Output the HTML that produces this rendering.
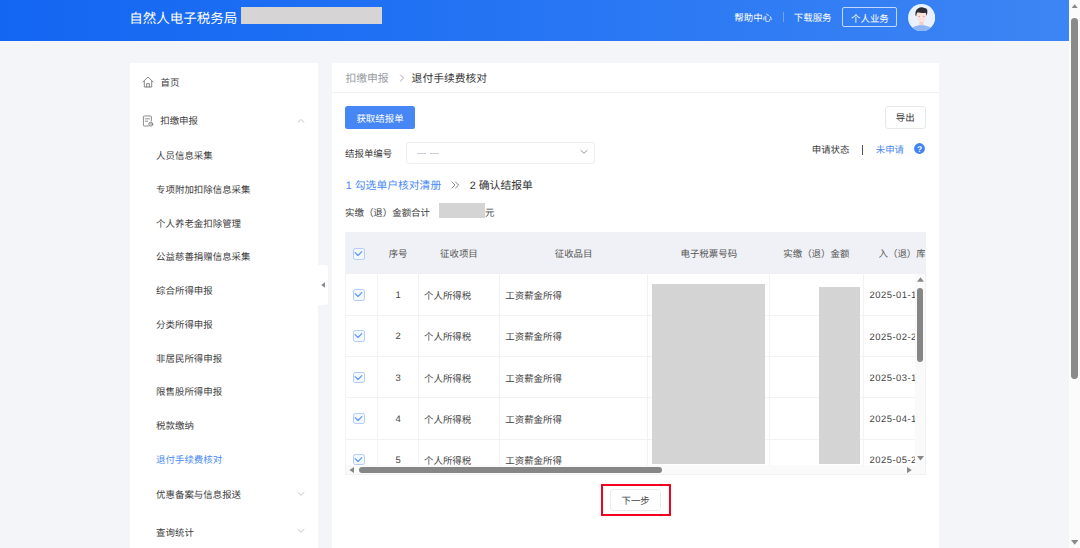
<!DOCTYPE html>
<html lang="zh-CN">
<head>
<meta charset="utf-8">
<title>自然人电子税务局</title>
<style>
*{box-sizing:border-box;margin:0;padding:0}
html,body{width:1080px;height:548px;overflow:hidden;background:#f4f5f9;font-family:"Liberation Sans",sans-serif;color:#333}
body{position:relative;font-size:9.45px;text-rendering:geometricPrecision}
.a{position:absolute}
.t{position:absolute;white-space:nowrap}
</style>
</head>
<body>
<div class="a" style="left:0.00px;top:0.00px;width:1069.00px;height:41.00px;background:linear-gradient(90deg,#1366f2 0%,#1f70f3 35%,#3d85f4 100%)"></div>
<div class="t" style="left:129.20px;top:8.80px;font-size:13.5px;line-height:20px;height:20px;color:#fff;">自然人电子税务局</div>
<div class="a" style="left:240.70px;top:7.20px;width:141.30px;height:16.90px;background:#d6d4d4"></div>
<div class="t" style="left:734.30px;top:11.50px;font-size:9.45px;line-height:14px;height:14px;color:#fff;">帮助中心</div>
<div class="a" style="left:783.00px;top:12.30px;width:1.00px;height:10.00px;background:rgba(255,255,255,.3)"></div>
<div class="t" style="left:793.80px;top:11.50px;font-size:9.45px;line-height:14px;height:14px;color:#fff;">下载服务</div>
<div class="a" style="left:842.30px;top:7.10px;width:55.20px;height:19.80px;border:1px solid rgba(255,255,255,.7);border-radius:2px"></div>
<div class="t" style="left:842.30px;top:12.50px;font-size:9.45px;line-height:14px;height:14px;color:#fff;width:55.2px;text-align:center;">个人业务</div>
<svg class="a" style="left:908.10px;top:3.90px" width="27.3" height="27.3" viewBox="0 0 27.3 27.3" ><defs><clipPath id="avc"><circle cx="13.65" cy="13.65" r="13.6"/></clipPath></defs><circle cx="13.65" cy="13.65" r="13.6" fill="#e8f1fd"/><g clip-path="url(#avc)"><path d="M1.5 27.3 Q3 22.8 9.2 21.7 L13.5 20.4 L17.9 21.7 Q24 22.8 25.8 27.3 Z" fill="#8fb5f7"/><path d="M11.4 15.5 H15.5 V20.6 Q13.5 22.6 11.4 20.6 Z" fill="#f8cdc5"/><path d="M8.3 8.6 Q7.9 13 9.6 15.5 Q11.5 18.1 13.5 18.1 Q15.5 18.1 17.2 15.5 Q18.8 13 18.4 8.6 Z" fill="#fbdfd9"/><path d="M7.7 12 Q6.5 6.6 10 4.5 Q13 2.6 16.4 3.9 Q18.7 4.1 19.3 6 Q19.6 8.6 18.7 12 Q18.4 9.6 17.5 8.7 Q13.5 9.6 9.6 8.3 Q8.4 9.5 8.2 12 Z" fill="#2b2d33"/><circle cx="11.3" cy="12.5" r="0.55" fill="#8b8f99"/><circle cx="15.8" cy="12.5" r="0.55" fill="#8b8f99"/><path d="M12.2 16.2 Q13.5 17.4 14.9 16.2 Z" fill="#fff"/></g></svg>
<div class="a" style="left:1069.00px;top:0.00px;width:11.00px;height:548.00px;background:#fbfbfb"></div>
<div class="a" style="left:1071.00px;top:18.00px;width:6.80px;height:361.00px;border-radius:3.4px;background:#8a8a8a"></div>
<svg class="a" style="left:1070.70px;top:3.60px" width="7.4" height="4.8" viewBox="0 0 7.4 4.8" ><path d="M0 4.8 L3.7 0.2 L7.4 4.8 Z" fill="#888"/></svg>
<svg class="a" style="left:1070.70px;top:539.60px" width="7.4" height="5" viewBox="0 0 7.4 5" ><path d="M0 0 L3.7 4.8 L7.4 0 Z" fill="#888"/></svg>
<div class="a" style="left:130.00px;top:63.00px;width:188.00px;height:485.00px;background:#fff"></div>
<div class="a" style="left:318.00px;top:265.00px;width:9.80px;height:40.30px;background:#fff;border-radius:0 3px 3px 0"></div>
<svg class="a" style="left:321.00px;top:282.30px" width="4.2" height="6" viewBox="0 0 4.2 6" ><path d="M4.2 0 L0.2 3 L4.2 6 Z" fill="#8a8a8a"/></svg>
<div class="t" style="left:160.60px;top:77.40px;font-size:9.45px;line-height:14px;height:14px;color:#3c3c3c;">首页</div>
<div class="t" style="left:160.20px;top:115.40px;font-size:9.45px;line-height:14px;height:14px;color:#3c3c3c;">扣缴申报</div>
<div class="t" style="left:156.10px;top:150.10px;font-size:9.45px;line-height:14px;height:14px;color:#3c3c3c;">人员信息采集</div>
<div class="t" style="left:156.10px;top:183.85px;font-size:9.45px;line-height:14px;height:14px;color:#3c3c3c;">专项附加扣除信息采集</div>
<div class="t" style="left:156.10px;top:217.60px;font-size:9.45px;line-height:14px;height:14px;color:#3c3c3c;">个人养老金扣除管理</div>
<div class="t" style="left:156.10px;top:251.35px;font-size:9.45px;line-height:14px;height:14px;color:#3c3c3c;">公益慈善捐赠信息采集</div>
<div class="t" style="left:156.10px;top:285.10px;font-size:9.45px;line-height:14px;height:14px;color:#3c3c3c;">综合所得申报</div>
<div class="t" style="left:156.10px;top:318.85px;font-size:9.45px;line-height:14px;height:14px;color:#3c3c3c;">分类所得申报</div>
<div class="t" style="left:156.10px;top:352.60px;font-size:9.45px;line-height:14px;height:14px;color:#3c3c3c;">非居民所得申报</div>
<div class="t" style="left:156.10px;top:386.35px;font-size:9.45px;line-height:14px;height:14px;color:#3c3c3c;">限售股所得申报</div>
<div class="t" style="left:156.10px;top:420.10px;font-size:9.45px;line-height:14px;height:14px;color:#3c3c3c;">税款缴纳</div>
<div class="t" style="left:156.10px;top:453.85px;font-size:9.45px;line-height:14px;height:14px;color:#4a8af4;">退付手续费核对</div>
<div class="t" style="left:156.10px;top:489.40px;font-size:9.45px;line-height:14px;height:14px;color:#3c3c3c;">优惠备案与信息报送</div>
<div class="t" style="left:156.10px;top:527.40px;font-size:9.45px;line-height:14px;height:14px;color:#3c3c3c;">查询统计</div>
<svg class="a" style="left:142.40px;top:76.40px" width="12" height="12" viewBox="0 0 12 12" fill="none" stroke="#707070" stroke-width="0.85" stroke-linejoin="round" stroke-linecap="round"><path d="M0.9 5.9 L6 1 L11.1 5.9"/><path d="M2.3 5 V11 H9.7 V5"/><path d="M4.7 11 V7.6 H7.3 V11"/></svg>
<svg class="a" style="left:142.40px;top:114.60px" width="12" height="12" viewBox="0 0 12 12" fill="none" stroke="#777" stroke-width="0.85" stroke-linejoin="round" stroke-linecap="round"><path d="M6.4 11 H2.2 Q1.4 11 1.4 10.2 V1.8 Q1.4 1 2.2 1 H8.6 Q9.4 1 9.4 1.8 V6"/><path d="M3.3 3.8 H7.5 M3.3 6.2 H5.6"/><circle cx="8.8" cy="9.2" r="2"/><path d="M8.1 8.7 H9.5 M8.1 9.7 H9.5" stroke-width="0.55"/></svg>
<svg class="a" style="left:297.00px;top:117.60px" width="8" height="6" viewBox="0 0 8 6" fill="none" stroke="#b9bcc4" stroke-width="0.9" stroke-linecap="round" stroke-linejoin="round"><path d="M1 4.3 L4 1.5 L7 4.3"/></svg>
<svg class="a" style="left:297.10px;top:490.60px" width="8" height="6" viewBox="0 0 8 6" fill="none" stroke="#b9bcc4" stroke-width="0.9" stroke-linecap="round" stroke-linejoin="round"><path d="M1 1.5 L4 4.3 L7 1.5"/></svg>
<svg class="a" style="left:297.10px;top:528.20px" width="8" height="6" viewBox="0 0 8 6" fill="none" stroke="#b9bcc4" stroke-width="0.9" stroke-linecap="round" stroke-linejoin="round"><path d="M1 1.5 L4 4.3 L7 1.5"/></svg>
<div class="a" style="left:332.00px;top:63.00px;width:607.00px;height:485.00px;background:#fff"></div>
<div class="a" style="left:332.00px;top:91.70px;width:607.00px;height:1.40px;background:#eff1f6"></div>
<div class="t" style="left:345.40px;top:71.65px;font-size:10.8px;line-height:14px;height:14px;color:#9a9da3;">扣缴申报</div>
<svg class="a" style="left:399.30px;top:74.30px" width="6" height="8" viewBox="0 0 6 8" fill="none" stroke="#9a9da3" stroke-width="0.9" stroke-linecap="round" stroke-linejoin="round"><path d="M1.5 1 L4.5 4 L1.5 7"/></svg>
<div class="t" style="left:411.60px;top:71.65px;font-size:10.8px;line-height:14px;height:14px;color:#333;">退付手续费核对</div>
<div class="a" style="left:345.00px;top:106.00px;width:70.00px;height:22.50px;background:#4687f5;border-radius:2.5px"></div>
<div class="t" style="left:345.00px;top:112.70px;font-size:9.45px;line-height:14px;height:14px;color:#fff;width:70px;text-align:center;">获取结报单</div>
<div class="a" style="left:884.90px;top:106.00px;width:40.80px;height:22.70px;background:#fff;border:1px solid #e6e8ec;border-radius:3px"></div>
<div class="t" style="left:884.90px;top:112.30px;font-size:9.45px;line-height:14px;height:14px;color:#333;width:40.8px;text-align:center;">导出</div>
<div class="t" style="left:345.00px;top:148.20px;font-size:9.45px;line-height:14px;height:14px;color:#3c3c3c;">结报单编号</div>
<div class="a" style="left:406.00px;top:141.60px;width:189.20px;height:22.00px;border:1px solid #eceef2;border-radius:3px;background:#fff"></div>
<div class="a" style="left:416.60px;top:153.40px;width:9.60px;height:1.00px;background:#c9ccd3"></div>
<div class="a" style="left:429.80px;top:153.40px;width:9.60px;height:1.00px;background:#c9ccd3"></div>
<svg class="a" style="left:579.70px;top:149.20px" width="8" height="6" viewBox="0 0 8 6" fill="none" stroke="#8a8d94" stroke-width="0.9" stroke-linecap="round" stroke-linejoin="round"><path d="M1 1.5 L4 4.3 L7 1.5"/></svg>
<div class="t" style="left:811.70px;top:144.00px;font-size:9.45px;line-height:14px;height:14px;color:#3c3c3c;">申请状态</div>
<div class="a" style="left:862.00px;top:144.80px;width:1.20px;height:9.80px;background:#555"></div>
<div class="t" style="left:875.70px;top:144.00px;font-size:9.45px;line-height:14px;height:14px;color:#4a8af4;">未申请</div>
<svg class="a" style="left:914.30px;top:142.60px" width="11" height="11" viewBox="0 0 11 11" ><circle cx="5.5" cy="5.5" r="5.4" fill="#3f83f6"/><text x="5.5" y="8.5" font-size="8.4" font-weight="bold" fill="#fff" text-anchor="middle" font-family="Liberation Sans, sans-serif">?</text></svg>
<div class="t" style="left:345.80px;top:178.65px;font-size:10.8px;line-height:14px;height:14px;color:#4a8af4;">1 勾选单户核对清册</div>
<svg class="a" style="left:451.00px;top:180.80px" width="9" height="8" viewBox="0 0 9 8" fill="none" stroke="#666" stroke-width="0.8" stroke-linecap="round" stroke-linejoin="round"><path d="M1 1 L4 4 L1 7 M4.6 1 L7.6 4 L4.6 7"/></svg>
<div class="t" style="left:469.80px;top:178.65px;font-size:10.8px;line-height:14px;height:14px;color:#333;">2 确认结报单</div>
<div class="t" style="left:345.00px;top:207.40px;font-size:9.45px;line-height:14px;height:14px;color:#3c3c3c;">实缴（退）金额合计</div>
<div class="a" style="left:439.00px;top:203.00px;width:46.00px;height:14.60px;background:#d4d4d4"></div>
<div class="t" style="left:485.00px;top:207.40px;font-size:9.45px;line-height:14px;height:14px;color:#3c3c3c;">元</div>
<div class="a" style="left:345.20px;top:232.10px;width:580.60px;height:242.50px;background:#fff"></div>
<div class="a" style="left:345.20px;top:232.10px;width:580.60px;height:41.90px;background:#f0f1f6"></div>
<div class="t" style="left:338.10px;top:248.00px;font-size:9.45px;line-height:14px;height:14px;color:#555;width:120px;text-align:center;">序号</div>
<div class="t" style="left:398.90px;top:248.00px;font-size:9.45px;line-height:14px;height:14px;color:#555;width:120px;text-align:center;">征收项目</div>
<div class="t" style="left:513.60px;top:248.00px;font-size:9.45px;line-height:14px;height:14px;color:#555;width:120px;text-align:center;">征收品目</div>
<div class="t" style="left:648.80px;top:248.00px;font-size:9.45px;line-height:14px;height:14px;color:#555;width:120px;text-align:center;">电子税票号码</div>
<div class="t" style="left:756.30px;top:248.00px;font-size:9.45px;line-height:14px;height:14px;color:#555;width:120px;text-align:center;">实缴（退）金额</div>
<div class="t" style="left:378.10px;top:289.20px;font-size:9.45px;line-height:14px;height:14px;color:#444;width:40px;text-align:center;">1</div>
<div class="t" style="left:424.00px;top:290.10px;font-size:9.45px;line-height:14px;height:14px;color:#444;">个人所得税</div>
<div class="t" style="left:505.30px;top:290.10px;font-size:9.45px;line-height:14px;height:14px;color:#444;">工资薪金所得</div>
<div class="t" style="left:869.60px;top:289.30px;font-size:9.45px;line-height:14px;height:14px;color:#444;letter-spacing:0.45px;">2025-01-19</div>
<div class="t" style="left:378.10px;top:330.40px;font-size:9.45px;line-height:14px;height:14px;color:#444;width:40px;text-align:center;">2</div>
<div class="t" style="left:424.00px;top:331.30px;font-size:9.45px;line-height:14px;height:14px;color:#444;">个人所得税</div>
<div class="t" style="left:505.30px;top:331.30px;font-size:9.45px;line-height:14px;height:14px;color:#444;">工资薪金所得</div>
<div class="t" style="left:869.60px;top:330.50px;font-size:9.45px;line-height:14px;height:14px;color:#444;letter-spacing:0.45px;">2025-02-29</div>
<div class="t" style="left:378.10px;top:371.60px;font-size:9.45px;line-height:14px;height:14px;color:#444;width:40px;text-align:center;">3</div>
<div class="t" style="left:424.00px;top:372.50px;font-size:9.45px;line-height:14px;height:14px;color:#444;">个人所得税</div>
<div class="t" style="left:505.30px;top:372.50px;font-size:9.45px;line-height:14px;height:14px;color:#444;">工资薪金所得</div>
<div class="t" style="left:869.60px;top:371.70px;font-size:9.45px;line-height:14px;height:14px;color:#444;letter-spacing:0.45px;">2025-03-19</div>
<div class="t" style="left:378.10px;top:412.80px;font-size:9.45px;line-height:14px;height:14px;color:#444;width:40px;text-align:center;">4</div>
<div class="t" style="left:424.00px;top:413.70px;font-size:9.45px;line-height:14px;height:14px;color:#444;">个人所得税</div>
<div class="t" style="left:505.30px;top:413.70px;font-size:9.45px;line-height:14px;height:14px;color:#444;">工资薪金所得</div>
<div class="t" style="left:869.60px;top:412.90px;font-size:9.45px;line-height:14px;height:14px;color:#444;letter-spacing:0.45px;">2025-04-19</div>
<div class="t" style="left:378.10px;top:454.00px;font-size:9.45px;line-height:14px;height:14px;color:#444;width:40px;text-align:center;">5</div>
<div class="t" style="left:424.00px;top:454.90px;font-size:9.45px;line-height:14px;height:14px;color:#444;">个人所得税</div>
<div class="t" style="left:505.30px;top:454.90px;font-size:9.45px;line-height:14px;height:14px;color:#444;">工资薪金所得</div>
<div class="t" style="left:869.60px;top:454.10px;font-size:9.45px;line-height:14px;height:14px;color:#444;letter-spacing:0.45px;">2025-05-29</div>
<div class="t" style="left:878.50px;top:248.00px;font-size:9.45px;line-height:14px;height:14px;color:#555;width:47.3px;overflow:hidden;">入（退）库日期</div>
<div class="a" style="left:376.90px;top:232.10px;width:1.00px;height:233.50px;background:#f1f2f6"></div>
<div class="a" style="left:418.20px;top:232.10px;width:1.00px;height:233.50px;background:#f1f2f6"></div>
<div class="a" style="left:499.00px;top:232.10px;width:1.00px;height:233.50px;background:#f1f2f6"></div>
<div class="a" style="left:647.30px;top:232.10px;width:1.00px;height:233.50px;background:#f1f2f6"></div>
<div class="a" style="left:769.00px;top:232.10px;width:1.00px;height:233.50px;background:#f1f2f6"></div>
<div class="a" style="left:862.90px;top:232.10px;width:1.00px;height:233.50px;background:#f1f2f6"></div>
<div class="a" style="left:345.20px;top:314.80px;width:570.60px;height:1.00px;background:#f1f2f6"></div>
<div class="a" style="left:345.20px;top:356.10px;width:570.60px;height:1.00px;background:#f1f2f6"></div>
<div class="a" style="left:345.20px;top:397.40px;width:570.60px;height:1.00px;background:#f1f2f6"></div>
<div class="a" style="left:345.20px;top:438.70px;width:570.60px;height:1.00px;background:#f1f2f6"></div>
<div class="a" style="left:353.20px;top:248.00px;width:11.60px;height:11.60px;border:1.2px solid #b3cefa;border-radius:2.2px;background:#f3f7ff"></div>
<svg class="a" style="left:353.20px;top:248.00px" width="11.6" height="11.6" viewBox="0 0 11.6 11.6" fill="none" stroke="#5b97f6" stroke-width="1.15" stroke-linecap="round" stroke-linejoin="round"><path d="M2.1 4.7 L5 7.5 L8.8 3.7"/></svg>
<div class="a" style="left:353.20px;top:289.10px;width:11.60px;height:11.60px;border:1.2px solid #b3cefa;border-radius:2.2px;background:#f3f7ff"></div>
<svg class="a" style="left:353.20px;top:289.10px" width="11.6" height="11.6" viewBox="0 0 11.6 11.6" fill="none" stroke="#5b97f6" stroke-width="1.15" stroke-linecap="round" stroke-linejoin="round"><path d="M2.1 4.7 L5 7.5 L8.8 3.7"/></svg>
<div class="a" style="left:353.20px;top:330.30px;width:11.60px;height:11.60px;border:1.2px solid #b3cefa;border-radius:2.2px;background:#f3f7ff"></div>
<svg class="a" style="left:353.20px;top:330.30px" width="11.6" height="11.6" viewBox="0 0 11.6 11.6" fill="none" stroke="#5b97f6" stroke-width="1.15" stroke-linecap="round" stroke-linejoin="round"><path d="M2.1 4.7 L5 7.5 L8.8 3.7"/></svg>
<div class="a" style="left:353.20px;top:371.50px;width:11.60px;height:11.60px;border:1.2px solid #b3cefa;border-radius:2.2px;background:#f3f7ff"></div>
<svg class="a" style="left:353.20px;top:371.50px" width="11.6" height="11.6" viewBox="0 0 11.6 11.6" fill="none" stroke="#5b97f6" stroke-width="1.15" stroke-linecap="round" stroke-linejoin="round"><path d="M2.1 4.7 L5 7.5 L8.8 3.7"/></svg>
<div class="a" style="left:353.20px;top:412.70px;width:11.60px;height:11.60px;border:1.2px solid #b3cefa;border-radius:2.2px;background:#f3f7ff"></div>
<svg class="a" style="left:353.20px;top:412.70px" width="11.6" height="11.6" viewBox="0 0 11.6 11.6" fill="none" stroke="#5b97f6" stroke-width="1.15" stroke-linecap="round" stroke-linejoin="round"><path d="M2.1 4.7 L5 7.5 L8.8 3.7"/></svg>
<div class="a" style="left:353.20px;top:453.90px;width:11.60px;height:11.60px;border:1.2px solid #b3cefa;border-radius:2.2px;background:#f3f7ff"></div>
<svg class="a" style="left:353.20px;top:453.90px" width="11.6" height="11.6" viewBox="0 0 11.6 11.6" fill="none" stroke="#5b97f6" stroke-width="1.15" stroke-linecap="round" stroke-linejoin="round"><path d="M2.1 4.7 L5 7.5 L8.8 3.7"/></svg>
<div class="a" style="left:651.80px;top:283.70px;width:112.80px;height:180.70px;background:#d4d4d4"></div>
<div class="a" style="left:818.70px;top:286.70px;width:41.20px;height:177.60px;background:#d4d4d4"></div>
<div class="a" style="left:915.40px;top:274.00px;width:10.40px;height:190.60px;background:#fafafa"></div>
<div class="a" style="left:917.10px;top:287.80px;width:6.00px;height:74.50px;border-radius:3px;background:#868686"></div>
<svg class="a" style="left:916.60px;top:277.40px" width="7" height="4.8" viewBox="0 0 7 4.8" ><path d="M0 4.8 L3.5 0.2 L7 4.8 Z" fill="#888"/></svg>
<svg class="a" style="left:916.60px;top:456.20px" width="7" height="4.8" viewBox="0 0 7 4.8" ><path d="M0 0 L3.5 4.6 L7 0 Z" fill="#888"/></svg>
<div class="a" style="left:345.20px;top:464.60px;width:580.60px;height:9.80px;background:#fafafa"></div>
<div class="a" style="left:359.40px;top:466.60px;width:302.80px;height:6.70px;border-radius:3.4px;background:#868686"></div>
<svg class="a" style="left:349.20px;top:466.90px" width="5.2" height="6.2" viewBox="0 0 5.2 6.2" ><path d="M5.2 0 L0.4 3.1 L5.2 6.2 Z" fill="#888"/></svg>
<svg class="a" style="left:906.60px;top:466.90px" width="5.2" height="6.2" viewBox="0 0 5.2 6.2" ><path d="M0 0 L4.8 3.1 L0 6.2 Z" fill="#888"/></svg>
<div class="a" style="left:344.70px;top:232.10px;width:1.00px;height:242.50px;background:#f1f2f6"></div>
<div class="a" style="left:925.30px;top:232.10px;width:1.00px;height:242.50px;background:#f1f2f6"></div>
<div class="a" style="left:345.20px;top:474.10px;width:580.60px;height:1.00px;background:#f1f2f6"></div>
<div class="a" style="left:601.10px;top:483.70px;width:70.00px;height:32.60px;border:2px solid #f4001e"></div>
<div class="a" style="left:610.00px;top:488.90px;width:51.30px;height:22.60px;border:1px solid #ececec;border-radius:3px;background:#fff"></div>
<div class="t" style="left:610.00px;top:494.90px;font-size:9.45px;line-height:14px;height:14px;color:#444;width:51.3px;text-align:center;">下一步</div>
</body>
</html>
